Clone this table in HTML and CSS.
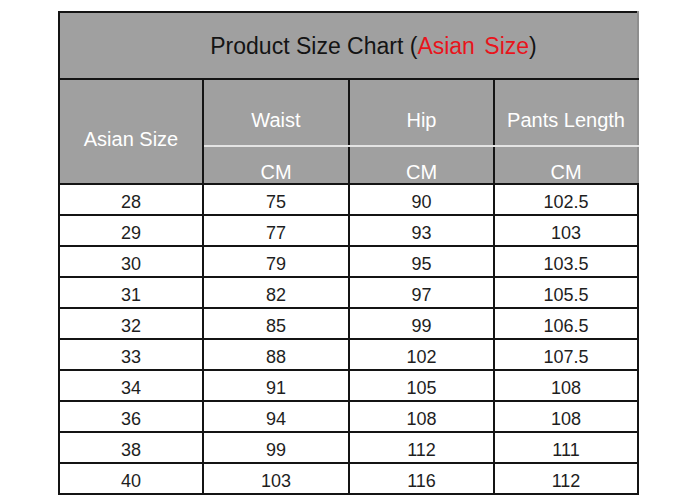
FILE: index.html
```html
<!DOCTYPE html>
<html>
<head>
<meta charset="utf-8">
<link rel="stylesheet" href="styles.css">
</head>
<body>
<table class="chart">
  <colgroup>
    <col class="c1"><col class="c2"><col class="c3"><col class="c4">
  </colgroup>
  <thead>
    <tr class="title-row">
      <th colspan="4" class="title">Product Size Chart (<span class="red">Asian Size</span>)</th>
    </tr>
    <tr class="head1">
      <th rowspan="2" class="size-head">Asian Size</th>
      <th class="top">Waist</th>
      <th class="top">Hip</th>
      <th class="top last">Pants Length</th>
    </tr>
    <tr class="head2">
      <th class="unit">CM</th>
      <th class="unit">CM</th>
      <th class="unit last">CM</th>
    </tr>
  </thead>
  <tbody>
    <tr><td>28</td><td>75</td><td>90</td><td>102.5</td></tr>
    <tr><td>29</td><td>77</td><td>93</td><td>103</td></tr>
    <tr><td>30</td><td>79</td><td>95</td><td>103.5</td></tr>
    <tr><td>31</td><td>82</td><td>97</td><td>105.5</td></tr>
    <tr><td>32</td><td>85</td><td>99</td><td>106.5</td></tr>
    <tr><td>33</td><td>88</td><td>102</td><td>107.5</td></tr>
    <tr><td>34</td><td>91</td><td>105</td><td>108</td></tr>
    <tr><td>36</td><td>94</td><td>108</td><td>108</td></tr>
    <tr><td>38</td><td>99</td><td>112</td><td>111</td></tr>
    <tr><td>40</td><td>103</td><td>116</td><td>112</td></tr>
  </tbody>
</table>
</body>
</html>
```

FILE: styles.css
```css
html, body {
  margin: 0;
  padding: 0;
  background: #ffffff;
}

body {
  font-family: "Liberation Sans", Arial, sans-serif;
}

.chart {
  border-collapse: collapse;
  table-layout: fixed;
  margin: 11px 0 0 58px;
}

.c1 { width: 144px; }
.c2 { width: 146px; }
.c3 { width: 145px; }
.c4 { width: 144px; }

.chart th,
.chart td {
  border: 2px solid #141414;
  padding: 0;
  text-align: center;
}

.chart th {
  background: #a0a0a0;
  color: #ffffff;
  font-weight: normal;
  font-size: 20px;
  line-height: 22px;
}

.chart th.title {
  height: 65px;
  font-size: 23px;
  line-height: 26px;
  color: #141414;
  padding: 0 0 0 50px;
  border-right-color: #8e8e8e;
}

.chart .red {
  color: #e8141c;
  word-spacing: 3px;
}

.chart th.size-head {
  padding-top: 14px;
}

.chart th.top {
  height: 51px;
  padding-top: 14px;
  border-bottom: 2px solid #e4e4e4;
}

.chart th.unit {
  height: 21px;
  padding-top: 14px;
}

.chart th.last {
  border-right-color: #8e8e8e;
}

.chart td {
  height: 24px;
  font-size: 18px;
  color: #1e1e1e;
  padding-top: 5px;
  line-height: 24px;
}
```
